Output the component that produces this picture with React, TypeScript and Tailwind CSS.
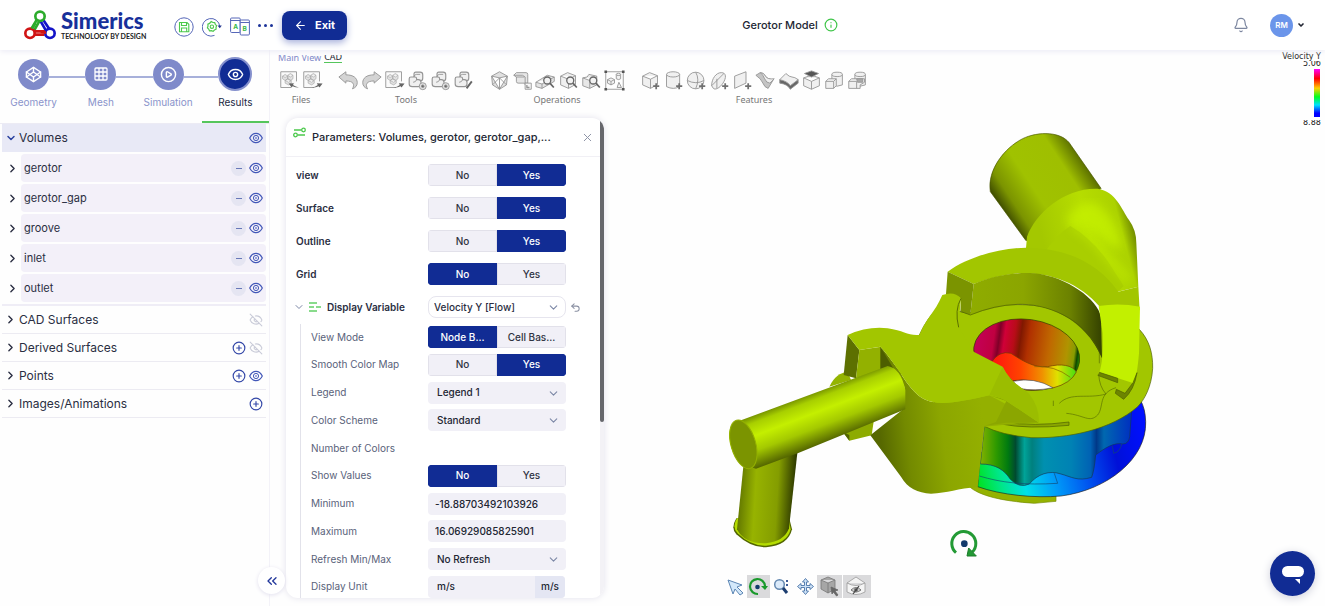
import type { ReactNode } from "react";
import { ArrowLeft, Bell, ChevronDown, ChevronRight, ChevronsLeft, CirclePlus, CirclePlay, Codepen, Eye, EyeOff, Info, Undo2, X } from "lucide-react";

const steps = [
    { label: "Geometry", icon: <Codepen size={17} strokeWidth={2} /> },
    { label: "Mesh", icon: <MeshIcon /> },
    { label: "Simulation", icon: <CirclePlay size={17} strokeWidth={2} /> },
    { label: "Results", icon: <Eye size={17} strokeWidth={2} />, active: true },
];

const volumes = ["gerotor", "gerotor_gap", "groove", "inlet", "outlet"];

const sections = [
    { label: "CAD Surfaces", add: false, eye: "off" },
    { label: "Derived Surfaces", add: true, eye: "off" },
    { label: "Points", add: true, eye: "on" },
    { label: "Images/Animations", add: true, eye: "" },
];

const toolGroups: { label: string; tools: string[] }[] = [
    { label: "Files", tools: ["import", "export"] },
    { label: "Tools", tools: ["undo", "redo", "export", "union", "union", "edit"] },
    { label: "Operations", tools: ["facets", "simplify", "findface", "findcube", "findmesh", "bounds"] },
    { label: "Features", tools: ["cube", "cylinder", "sphere", "disc", "plane", "sheet", "thicken", "cap", "merge", "intersect"] },
];

/* ---------- Icons ---------- */

function MeshIcon() {
    return (
        <svg width="14" height="14" viewBox="0 0 14 14" fill="none" stroke="currentColor" strokeWidth="1.3">
            <rect x="1" y="1" width="12" height="12" rx="1" />
            <path d="M5 1v12M9 1v12M1 5h12M1 9h12" />
        </svg>
    );
}

function Logo() {
    return (
        <svg className="shrink-0" width="32" height="30" viewBox="0 0 96 90" fill="none" strokeWidth="8">
            <path d="M38 30L20 60M47 32L31 60" stroke="#2bab2b" />
            <path d="M58 30L78 60M50 34L66 62" stroke="#1414c8" />
            <path d="M30 64H66M30 74H62" stroke="#d01414" />
            <circle cx="48" cy="19" r="14" stroke="#2bab2b" fill="#fff" />
            <circle cx="18" cy="70" r="14" stroke="#d01414" fill="#fff" />
            <circle cx="78" cy="70" r="14" stroke="#1414c8" fill="#fff" />
            <path d="M24 56L34 40" stroke="#2bab2b" />
            <path d="M50 66L66 68" stroke="#d01414" />
        </svg>
    );
}

function SaveIcon() {
    return (
        <svg width="20" height="20" viewBox="0 0 20 20" fill="none">
            <circle cx="10" cy="10" r="9.2" stroke="#5667b8" />
            <path d="M5.5 5.5h7.500l1.800 1.800v7.400H5.500zM7.500 5.500v3h5v-3M7.500 14.500v-3.500h5.200v3.500" stroke="#4cc94c" strokeWidth="1.100" />
        </svg>
    );
}

function GearIcon() {
    return (
        <svg width="20" height="20" viewBox="0 0 20 20" fill="none">
            <path d="M12.500 18.400A8.800 8.800 0 1 1 17.800 9.500" stroke="#5667b8" />
            <path d="M15.500 8.500l2.300 2.800 2-2.800z" fill="#24368f" />
            <path d="M9.200 4.500l1.700 1 1.800.1.600 1.700 1.300 1.300-.600 1.700.1 1.900-1.700.8-1.300 1.300-1.700-.600-1.900.1-.8-1.700-1.300-1.300.600-1.700-.1-1.900 1.700-.8z" stroke="#4cc94c" strokeWidth="1.200" />
            <circle cx="9.900" cy="9.700" r="1.700" stroke="#4cc94c" strokeWidth="1.100" />
        </svg>
    );
}

function CompareIcon() {
    return (
        <svg width="20" height="20" viewBox="0 0 20 20" fill="none">
            <rect x=".6" y="1" width="9.600" height="14.500" rx="1" stroke="#5667b8" />
            <rect x="10.200" y="3" width="9.200" height="15" rx="1" stroke="#5667b8" fill="#fff" />
            <path d="M.6 3.500h9.600M10.200 5.500h9.200" stroke="#5667b8" />
            <text x="3.200" y="11.500" fontSize="6.500" fontWeight="700" fill="#35b845">A</text>
            <text x="12.600" y="13.800" fontSize="6.500" fontWeight="700" fill="#35b845">B</text>
        </svg>
    );
}

function SlidersIcon() {
    return (
        <svg width="13" height="12" viewBox="0 0 13 12" fill="none" stroke="#4cc94c" strokeWidth="1.300">
            <circle cx="10.500" cy="3" r="1.800" />
            <circle cx="2.500" cy="8" r="1.800" />
            <path d="M1 3h7.500M4.500 8H12" />
        </svg>
    );
}

function TreeEye({ off = false }: { off?: boolean }) {
    return off ? (
        <EyeOff size={14} strokeWidth={1.8} className="text-[#c9cbd8]" />
    ) : (
        <svg width="14" height="12" viewBox="0 0 14 12" fill="none" stroke="#4358b8">
            <path d="M.7 6C2.200 3 4.500 1.300 7 1.300S11.800 3 13.300 6c-1.500 3-3.800 4.700-6.300 4.700S2.200 9 .7 6z" strokeWidth="1.200" />
            <circle cx="7" cy="6" r="2.600" />
            <circle cx="7" cy="6" r=".5" strokeWidth=".8" />
        </svg>
    );
}

const plus = <path d="M18.500 15v7M15 18.500h7" stroke="#707070" strokeWidth="2" />;
const lens = (
    <g stroke="#666">
        <circle cx="14" cy="12" r="4" fill="#f2f2f2" strokeWidth="1.500" />
        <path d="M17 15l4.500 5" strokeWidth="2" />
    </g>
);
const box = <path d="M3 7l8-4 9 3.500v10L12 21l-9-4zM3 7l9 3.500 8-4M12 10.500V21" />;
const fileSheet = (
    <>
        <path d="M20 13V2H2v18h12" fill="#fafafa" />
        <path d="M4 7l3-2 3 2v3l-3 2-3-2zM4 7l3 1.500L10 7M10 6l3-2 3 2v4l-3 2-3-2zM10 6l3 2 3-2M7 12l3-2 4 2v3l-3 2-4-2zM7 12l4 2 3-2" fill="#e2e2e2" stroke="#a5a5a5" strokeWidth=".7" />
    </>
);
const blocks = (
    <>
        <path d="M8 4.500q0-2 2-2h5q3 0 3 3v4q0 3-3 3h-5q-2 0-2-2z" strokeWidth="1.300" />
        <path d="M2.500 10q0-2 2-2H9q2 0 2 2v1h2q3 0 3 3v2q0 3-3 3H6q-3.500 0-3.500-3z" strokeWidth="1.300" />
        <path d="M11 11q-1 3-4 3M8 8q0-3 3-3h4" fill="none" />
    </>
);

const glyphs: Record<string, ReactNode> = {
    import: <>{fileSheet}<path d="M23 20q-4-1-7-3l1-1.800-6 .3 3.500 4.500 1-1.500q3 1.500 7.500 1.500z" fill="#666" stroke="none" /></>,
    export: <>{fileSheet}<path d="M11 20q4-.5 7-3l-1-1.800 6.500.3-3.500 4.500-1-1.500q-4 2-8 1.500z" fill="#666" stroke="none" /></>,
    undo: <path d="M1 8l8-6v3.500c9 0 13 4 13 9q0 5-5.500 7c3-5 1-9-7.500-9V15z" fill="#d4d4d4" />,
    redo: <path d="M23 8l-8-6v3.500c-9 0-13 4-13 9q0 5 5.500 7c-3-5-1-9 7.500-9V15z" fill="#d4d4d4" />,
    union: <>{blocks}<circle cx="18" cy="18.500" r="4" fill="#e2e2e2" /><circle cx="18" cy="18.500" r="1.500" fill="#666" /></>,
    edit: <>{blocks}<path d="M21.500 13l-6 8" stroke="#666" strokeWidth="2.200" /></>,
    facets: <path d="M3 7l9-5 9 5-1 10-8 5-8-5zM3 7l9 2 9-2M12 9v13M12 9L4 17M12 9l8 8M3 7l9 15 9-15" fill="#e0e0e0" />,
    simplify: <><path d="M2 6l3-3h11q2 0 2 2v10H7q-2 0-2-2V8zM2 6h10l3 2v9M5 8h9" fill="#e6e6e6" /><path d="M15 15h7v7h-7z" fill="#f6f6f6" /><path d="M17 17v3h3" strokeWidth="1.500" /></>,
    findface: <><path d="M1 14l13-8 8 2v5L8 21l-7-2zM1 14l7 2 14-8M8 16v5" fill="#e4e4e4" />{lens}</>,
    findcube: <>{box}{lens}</>,
    findmesh: <><path d="M2 9l5-1 2-3 9 2v10l-8 4-8-3zM2 9l8 3 8-4M10 12v9" fill="#e8e8e8" />{lens}</>,
    bounds: (
        <>
            <path d="M2 2h20v20H2z" fill="none" />
            <path d="M4 11l4-2 4 2v4l-4 2-4-2zM4 11l4 2 4-2M8 13v4M14 5v5q3 2 5 0V5M15 20l2-6 3 6z" />
            <ellipse cx="16.500" cy="5" rx="2.500" ry="1.300" />
            <path d="M.5.5h3v3h-3zM20.500.5h3v3h-3zM.5 20.500h3v3h-3zM20.500 20.500h3v3h-3z" fill="#555" stroke="none" />
        </>
    ),
    cube: <>{box}{plus}</>,
    cylinder: <><path d="M4 5v14q8 4 15 0V5" /><ellipse cx="11.500" cy="5" rx="7.500" ry="3" />{plus}</>,
    sphere: <><circle cx="11" cy="12" r="9.500" /><path d="M1.500 12q10 5 19 0M11 2.500q5 8 0 19" fill="none" />{plus}</>,
    disc: <><path d="M3 18C3 10 8 3 14 3s6 6 2 12-9 8-11 6zM3 18L17 4M9 10v11" />{plus}</>,
    plane: <><path d="M3 7l13-5v13L3 21z" />{plus}</>,
    sheet: <><path d="M1 6l5-3q4 0 6 4t9 4l-6 10q-4-1-6-6T1 6z" fill="#c4c4c4" /><path d="M6 3q4 0 6 4t10 3l-5 5q-4 0-6-5T6 3z" fill="#eee" /></>,
    thicken: <><path d="M2 11v4q9 1 12 7l9-7v-4z" fill="#666" /><path d="M2 11l7-7q4 4 7 4t7 3l-9 7q-3-5-12-7z" /></>,
    cap: <><path d="M3 9l9-3 9 3v9l-9 4-9-4zM3 9l9 4 9-4M12 13v9" /><path d="M4 4l8-3 8 3-8 4z" fill="#555" /></>,
    merge: <><path d="M9 5v12q6 3 12 0V5" /><ellipse cx="15" cy="5" rx="6" ry="2.500" /><path d="M2 13l3-3h9v8l-3 3H2zM2 13h9v8M11 13l3-3" /></>,
    intersect: <><path d="M9 5v12q6 3 12 0V5" /><ellipse cx="15" cy="5" rx="6" ry="2.500" /><path d="M2 13l3-3h15v4l-5 3v4H2zM2 13h9v8" /><path d="M11 10h7v4h-6z" fill="#aaa" /></>,
};

function ToolButton({ name }: { name: string }) {
    return (
        <button aria-label={name} className="flex w-[23px] justify-center">
            <svg width="21" height="21" viewBox="0 0 24 24" fill="#f0f0f0" stroke="#949494" strokeLinejoin="round">
                {glyphs[name]}
            </svg>
        </button>
    );
}

/* ---------- Header ---------- */

function Header() {
    return (
        <header className="z-10 flex h-[50px] shrink-0 items-center bg-white pr-5 pl-6 shadow-[0_1px_6px_#e9e8f4]">
            <a href="#" className="flex items-center gap-[5px]">
                <Logo />
                <span className="flex w-[113px] flex-col font-[Lato,sans-serif] text-[#17309a]">
                    <span className="text-[22px] leading-[22px] font-black">Simerics</span>
                    <span className="text-[7px] leading-[8px] font-bold whitespace-nowrap text-[#222]">TECHNOLOGY BY DESIGN</span>
                </span>
            </a>
            <div className="flex items-center gap-2 pt-1">
                <button aria-label="Save"><SaveIcon /></button>
                <button aria-label="Run settings"><GearIcon /></button>
                <button aria-label="Compare"><CompareIcon /></button>
                <button aria-label="More" className="mb-1 flex gap-[3px]">
                    <span className="size-[3px] rounded-full bg-[#1c3399]"></span>
                    <span className="size-[3px] rounded-full bg-[#1c3399]"></span>
                    <span className="size-[3px] rounded-full bg-[#1c3399]"></span>
                </button>
            </div>
            <button className="ml-[9px] flex h-[29px] items-center gap-2 rounded-lg bg-[#112c94] px-3 text-[11px] font-bold text-white shadow-[0_3px_7px_#aab3dc]">
                <ArrowLeft size={13} />
                Exit
            </button>
            <div className="flex flex-1 items-center justify-center gap-[6px] text-[11px] font-medium">
                <h1>Gerotor Model</h1>
                <Info size={14} className="text-[#3fc549]" />
            </div>
            <button aria-label="Notifications"><Bell size={16} strokeWidth={1.8} className="text-[#7d87a0]" /></button>
            <button className="ml-[21px] flex items-center gap-1">
                <span className="flex size-[23px] items-center justify-center rounded-full bg-[#6b95ea] text-[8px] font-semibold text-white">RM</span>
                <ChevronDown size={8} strokeWidth={5} />
            </button>
        </header>
    );
}

/* ---------- Sidebar ---------- */

function StepNav() {
    return (
        <nav className="grid grid-cols-4 border-b border-[#ecebf4]">
            {steps.map((step, i) => (
                <button key={step.label} className={`flex h-[73px] flex-col items-center border-b-2 pt-[6px] text-[10px] ${step.active ? "border-[#55c65c] text-[#222842]" : "border-transparent text-[#8a94cb]"}`}>
                    <span className="flex h-9 w-full items-center">
                        <span className={`mt-[6px] h-[2px] flex-1 ${i > 0 ? "bg-[#a7b0da]" : ""}`}></span>
                        <span className={`flex items-center justify-center rounded-full text-white ${step.active ? "size-[34px] border-2 border-[#8590cd] bg-[#112c94]" : "size-[31px] bg-[#7f8aca]"}`}>
                            {step.icon}
                        </span>
                        <span className={`mt-[6px] h-[2px] flex-1 ${i < 3 ? "bg-[#a7b0da]" : ""}`}></span>
                    </span>
                    <span className="mt-[3px] leading-[14px]">{step.label}</span>
                </button>
            ))}
        </nav>
    );
}

function Sidebar() {
    return (
        <aside className="relative w-[270px] shrink-0 border-r border-[#f3f2f8] text-[12px] text-[#2a2e42]">
            <StepNav />
            <div className="pr-[3px] pl-[2px]">
                <div className="flex h-7 items-center bg-[#e8e9f6] pr-[3px] pl-[3px]">
                    <button className="flex flex-1 items-center gap-[2px] text-left">
                        <ChevronDown size={12} strokeWidth={3} className="text-[#2b42a0]" />
                        Volumes
                    </button>
                    <button aria-label="Toggle Volumes"><TreeEye /></button>
                </div>
                <ul className="flex flex-col gap-[2px] border-b-2 border-[#efedf6] py-[2px] text-[11px]">
                    {volumes.map((name) => (
                        <li key={name} className="flex h-7 items-center">
                            <button aria-label={`Expand ${name}`} className="w-[19px] pl-[4px]"><ChevronRight size={13} strokeWidth={2.5} /></button>
                            <div className="flex h-full flex-1 items-center rounded bg-[#f3f0f9] pr-[3px] pl-[3px]">
                                <span className="flex-1">{name}</span>
                                <button aria-label={`Remove ${name}`} className="mr-[3px] flex size-[15px] items-center justify-center rounded-full bg-[#e5e5f2]">
                                    <span className="h-px w-[6px] bg-[#6878b8]"></span>
                                </button>
                                <button aria-label={`Toggle ${name}`}><TreeEye /></button>
                            </div>
                        </li>
                    ))}
                </ul>
                {sections.map((s) => (
                    <div key={s.label} className="flex h-[28px] items-center gap-[3px] border-b border-[#ecebf2] pr-[3px] pl-[2px]">
                        <button className="flex flex-1 items-center gap-[2px] text-left">
                            <ChevronRight size={13} strokeWidth={2.5} />
                            {s.label}
                        </button>
                        {s.add && <button aria-label={`Add ${s.label}`}><CirclePlus size={14} className="text-[#3448a8]" /></button>}
                        {s.eye && <button aria-label={`Toggle ${s.label}`}><TreeEye off={s.eye === "off"} /></button>}
                    </div>
                ))}
            </div>
            <button aria-label="Collapse sidebar" className="absolute -right-4 bottom-3 z-10 flex size-[27px] items-center justify-center rounded-full bg-white text-[#24399c] shadow-[0_1px_4px_#e2e0ee]">
                <ChevronsLeft size={16} />
            </button>
        </aside>
    );
}

/* ---------- Parameters panel ---------- */

function Toggle({ label, value, options = ["No", "Yes"] }: { label: string; value: number; options?: string[] }) {
    return (
        <div role="group" aria-label={label} className="flex h-[22px] w-[138px] overflow-hidden rounded text-[10px] font-medium">
            {options.map((o, i) => (
                <button key={o} aria-pressed={i === value} className={`w-1/2 border ${i === value ? "border-[#112c94] bg-[#112c94] text-white" : "border-[#e2e1ea] bg-[#f1f0f7] text-[#2f3342]"}`}>
                    {o}
                </button>
            ))}
        </div>
    );
}

function Select({ id, value, outlined = false }: { id: string; value: string; outlined?: boolean }) {
    return (
        <div className="relative w-[138px]">
            <select id={id} className={`h-[22px] w-full appearance-none text-[10px] font-medium ${outlined ? "rounded-lg border border-[#e6e5ee] bg-white pl-[5px]" : "rounded bg-[#f1f0f7] pl-[9px]"}`}>
                <option>{value}</option>
            </select>
            <ChevronDown size={13} className="pointer-events-none absolute top-[5px] right-[6px] text-[#7c87a6]" />
        </div>
    );
}

function Row({ label, htmlFor, children }: { label: string; htmlFor?: string; children?: ReactNode }) {
    return (
        <div className="flex h-[22px] items-center">
            {htmlFor ? <label htmlFor={htmlFor} className="w-[117px]">{label}</label> : <span className="w-[117px]">{label}</span>}
            {children}
        </div>
    );
}

function ParametersPanel() {
    return (
        <section className="flex w-[318px] shrink-0 overflow-hidden rounded-xl bg-white shadow-[0_0_7px_#e3e2ec]">
            <div className="flex min-w-0 flex-1 flex-col overflow-hidden">
                <div className="flex h-[39px] shrink-0 items-center border-b border-[#f1f0f5] pr-[6px] pl-[7px]">
                    <span className="mb-2"><SlidersIcon /></span>
                    <h2 className="ml-[6px] flex-1 truncate text-[11px] font-medium">Parameters: Volumes, gerotor, gerotor_gap,...</h2>
                    <button aria-label="Close" className="text-[#8c92a5]"><X size={13} strokeWidth={1.8} /></button>
                </div>
                <div className="flex flex-col gap-[11px] pt-[7px] pl-[10px] text-[10px] font-semibold text-[#2a2e42]">
                    {[["view", 1], ["Surface", 1], ["Outline", 1], ["Grid", 0]].map(([label, value]) => (
                        <div key={label} className="flex h-[22px] items-center">
                            <span className="w-[132px]">{label}</span>
                            <Toggle label={String(label)} value={Number(value)} />
                        </div>
                    ))}
                    <div className="flex h-[22px] items-center">
                        <ChevronDown size={12} className="-ml-[3px] text-[#7c87a6]" />
                        <svg className="ml-1" width="12" height="10" viewBox="0 0 12 10" stroke="#63d067" strokeWidth="1.300">
                            <path d="M0 1h8M0 5h5M7 5h5M0 9h8" />
                        </svg>
                        <label htmlFor="variable" className="ml-[6px] w-[101px]">Display Variable</label>
                        <Select id="variable" value="Velocity Y [Flow]" outlined />
                        <button aria-label="Reset" className="ml-1 text-[#8a90a2]"><Undo2 size={11} strokeWidth={2.2} /></button>
                    </div>
                </div>
                <div className="mt-[6px] ml-[14px] flex h-[274px] shrink-0 flex-col justify-between border-l border-[#e2e2ea] pt-[2px] pl-[10px] text-[10px] text-[#59627a] [&_input]:text-[#222633] [&_select]:text-[#222633]">
                    <Row label="View Mode"><Toggle label="View Mode" value={0} options={["Node B...", "Cell Bas..."]} /></Row>
                    <Row label="Smooth Color Map"><Toggle label="Smooth Color Map" value={1} /></Row>
                    <Row label="Legend" htmlFor="legend"><Select id="legend" value="Legend 1" /></Row>
                    <Row label="Color Scheme" htmlFor="scheme"><Select id="scheme" value="Standard" /></Row>
                    <Row label="Number of Colors" />
                    <Row label="Show Values"><Toggle label="Show Values" value={0} /></Row>
                    <Row label="Minimum" htmlFor="min"><input id="min" defaultValue="-18.88703492103926" className="h-[22px] w-[138px] rounded bg-[#f1f0f7] px-[7px] font-medium" /></Row>
                    <Row label="Maximum" htmlFor="max"><input id="max" defaultValue="16.06929085825901" className="h-[22px] w-[138px] rounded bg-[#f1f0f7] px-[7px] font-medium" /></Row>
                    <Row label="Refresh Min/Max" htmlFor="refresh"><Select id="refresh" value="No Refresh" /></Row>
                    <Row label="Display Unit" htmlFor="unit">
                        <div className="flex h-[22px] w-[137px] overflow-hidden rounded bg-[#f1f0f7]">
                            <input id="unit" defaultValue="m/s" className="min-w-0 flex-1 px-[9px] font-medium" />
                            <button className="bg-[#e4e6f3] px-[6px] font-medium text-[#222633]">m/s</button>
                        </div>
                    </Row>
                </div>
            </div>
            <div className="w-1 bg-[#f3f2f6]">
                <div className="h-[304px] rounded-full bg-[#66676c]"></div>
            </div>
        </section>
    );
}

/* ---------- Model view ---------- */

function GerotorModel() {
    return (
        <svg role="img" aria-label="Gerotor model" className="h-[450px] w-[480px] shrink-0" viewBox="0 0 1440 1350" fill="none" strokeLinejoin="round">
            <defs>
                <linearGradient id="disc" gradientUnits="userSpaceOnUse" x1="830" y1="1060" x2="1334" y2="940">
                    <stop offset="0" stopColor="#00e22a" />
                    <stop offset=".12" stopColor="#00e68a" />
                    <stop offset=".25" stopColor="#00e0e8" />
                    <stop offset=".42" stopColor="#009cf8" />
                    <stop offset=".6" stopColor="#0058f0" />
                    <stop offset=".8" stopColor="#0010d8" />
                    <stop offset="1" stopColor="#0010ff" />
                </linearGradient>
                <linearGradient id="wall" gradientUnits="userSpaceOnUse" x1="840" y1="0" x2="1290" y2="0">
                    <stop offset="0" stopColor="#7fb000" />
                    <stop offset=".1" stopColor="#2f9a00" />
                    <stop offset=".18" stopColor="#007a10" />
                    <stop offset=".23" stopColor="#004a30" />
                    <stop offset=".29" stopColor="#00a398" />
                    <stop offset=".34" stopColor="#00807e" />
                    <stop offset=".42" stopColor="#0090b0" />
                    <stop offset=".6" stopColor="#0082b4" />
                    <stop offset=".73" stopColor="#0062b4" />
                    <stop offset=".77" stopColor="#003888" />
                    <stop offset=".82" stopColor="#0068b0" />
                    <stop offset="1" stopColor="#0030c0" />
                </linearGradient>
                <linearGradient id="bore" gradientUnits="userSpaceOnUse" x1="818" y1="0" x2="1137" y2="0">
                    <stop offset="0" stopColor="#c40058" />
                    <stop offset=".17" stopColor="#c00040" />
                    <stop offset=".22" stopColor="#800028" />
                    <stop offset=".27" stopColor="#d00038" />
                    <stop offset=".36" stopColor="#b80c18" />
                    <stop offset=".42" stopColor="#801800" />
                    <stop offset=".5" stopColor="#b03000" />
                    <stop offset=".7" stopColor="#c06800" />
                    <stop offset=".87" stopColor="#b09400" />
                    <stop offset=".94" stopColor="#889c00" />
                    <stop offset=".97" stopColor="#104800" />
                    <stop offset="1" stopColor="#289000" />
                </linearGradient>
                <linearGradient id="floor" gradientUnits="userSpaceOnUse" x1="870" y1="0" x2="1125" y2="0">
                    <stop offset="0" stopColor="#ff1010" />
                    <stop offset=".35" stopColor="#ff4400" />
                    <stop offset=".6" stopColor="#f09000" />
                    <stop offset=".78" stopColor="#e0e000" />
                    <stop offset="1" stopColor="#48e010" />
                </linearGradient>
                <linearGradient id="outlet" gradientUnits="userSpaceOnUse" x1="915" y1="285" x2="1150" y2="130">
                    <stop offset="0" stopColor="#3f4d00" />
                    <stop offset=".14" stopColor="#7b9400" />
                    <stop offset=".4" stopColor="#a0c200" />
                    <stop offset=".8" stopColor="#9fbf00" />
                    <stop offset="1" stopColor="#5c7000" />
                </linearGradient>
                <linearGradient id="elbow" gradientUnits="userSpaceOnUse" x1="1030" y1="380" x2="1300" y2="310">
                    <stop offset="0" stopColor="#a4c800" />
                    <stop offset=".5" stopColor="#b6dd00" />
                    <stop offset=".85" stopColor="#acd200" />
                    <stop offset="1" stopColor="#6a8300" />
                </linearGradient>
                <linearGradient id="inlet" gradientUnits="userSpaceOnUse" x1="345" y1="812" x2="402" y2="962">
                    <stop offset="0" stopColor="#6f8a00" />
                    <stop offset=".15" stopColor="#a8cf00" />
                    <stop offset=".38" stopColor="#c4ef00" />
                    <stop offset=".65" stopColor="#a4c900" />
                    <stop offset="1" stopColor="#4c5c00" />
                </linearGradient>
                <linearGradient id="leg" gradientUnits="userSpaceOnUse" x1="112" y1="1130" x2="278" y2="1140">
                    <stop offset="0" stopColor="#617600" />
                    <stop offset=".3" stopColor="#97b300" />
                    <stop offset=".7" stopColor="#849d00" />
                    <stop offset="1" stopColor="#303c00" />
                </linearGradient>
                <linearGradient id="body" gradientUnits="userSpaceOnUse" x1="540" y1="970" x2="850" y2="930">
                    <stop offset="0" stopColor="#566800" />
                    <stop offset=".25" stopColor="#738a00" />
                    <stop offset=".6" stopColor="#8ca600" />
                    <stop offset="1" stopColor="#94b000" />
                </linearGradient>
                <linearGradient id="ring" gradientUnits="userSpaceOnUse" x1="808" y1="0" x2="1205" y2="0">
                    <stop offset="0" stopColor="#8fac00" />
                    <stop offset=".4" stopColor="#8ba500" />
                    <stop offset=".75" stopColor="#6c8200" />
                    <stop offset="1" stopColor="#334000" />
                </linearGradient>
                <filter id="soft"><feGaussianBlur stdDeviation="14" /></filter>
            </defs>

            {/* base and rotor */}
            <path d="M805 1100Q850 1140 1000 1150L1065 1144V1115L830 1080z" fill="#94b200" stroke="#728a00" strokeWidth="2" />
            <path d="M838 1000L830 1100C900 1125 1000 1135 1080 1128C1220 1110 1338 1015 1334 905Q1333 865 1318 840L1000 900z" fill="url(#disc)" stroke="#222" strokeWidth="2" />
            <path d="M850 915L838 1032C885 1032 910 1050 928 1078Q955 1106 985 1092C1010 1062 1045 1050 1080 1062C1110 1070 1130 1085 1172 1072Q1180 1050 1184 1005C1210 985 1240 966 1265 972Q1283 972 1286 950L1292 870L1180 920L1000 945z" fill="url(#wall)" stroke="#143858" strokeWidth="2" />
            <path d="M835 1068C900 1088 970 1096 1070 1090L1060 1060M1234 978L1238 1000Q1258 995 1262 972" stroke="#124a72" strokeWidth="2" />

            {/* flange */}
            <path d="M655 645Q680 590 715 560L800 580C900 540 1050 545 1150 600L1315 628C1345 660 1356 700 1355 745C1352 800 1330 840 1310 860C1230 930 1100 956 990 953Q900 945 848 918L700 850z" fill="#a2c600" stroke="#4c5e00" strokeWidth="2" />
            <path d="M848 918L908 906Q1000 920 1104 906V916Q980 928 900 912" fill="#8aa600" stroke="#4c5e00" strokeWidth="2" />
            <ellipse cx="977" cy="704" rx="160" ry="106" transform="rotate(8 977 704)" fill="url(#bore)" stroke="#323c00" strokeWidth="2" />
            <path d="M870 728Q895 690 930 700C960 720 1000 745 1040 740C1080 730 1115 735 1126 756Q1110 790 1055 804Q990 772 935 782L900 750z" fill="url(#floor)" stroke="#703800" strokeWidth="2" />
            <path d="M1000 740Q1060 735 1108 772" stroke="#806000" strokeWidth="2" />
            <path d="M936 784Q1000 770 1056 803Q1000 815 955 805z" fill="#fff" stroke="#555" strokeWidth="2" />
            <path d="M1075 850C1110 815 1160 838 1215 822Q1195 800 1193 762M1245 803C1190 820 1210 860 1190 885C1165 910 1150 885 1096 880M1057 842V858M1195 690V730" stroke="#5b7000" strokeWidth="2" />

            {/* outlet pipe */}
            <path d="M868 215C858 150 910 84 965 56C1010 34 1085 32 1110 76L1200 205L1110 300L975 362z" fill="url(#outlet)" stroke="#4a5800" strokeWidth="2" />
            <path d="M975 384L978 350C1005 278 1090 203 1190 206C1245 214 1262 268 1284 300Q1306 330 1306 370L1312 500L1250 515L1100 400z" fill="url(#elbow)" />
            <path d="M1095 300Q1125 245 1180 250Q1250 290 1262 390L1220 370Q1160 315 1110 318z" fill="#cbf800" opacity=".6" filter="url(#soft)" />
            <path d="M1028 402Q1060 350 1108 318Q1165 350 1218 420L1268 498L1250 515Q1150 420 1028 402z" fill="#a9ce00" />
            <path d="M1112 316Q1170 345 1220 415L1285 480" stroke="#cdfb00" strokeWidth="16" opacity=".5" filter="url(#soft)" />

            {/* raised ring */}
            <path d="M740 455C800 410 900 384 975 383C1110 384 1200 440 1252 515L1312 500L1316 570L1198 562C1130 480 1030 455 950 460Q880 468 818 492z" fill="#a2c600" />
            <path d="M818 492C880 465 950 456 1000 460C1100 470 1190 540 1200 590L1203 715C1150 590 1030 550 950 553Q880 560 808 585z" fill="url(#ring)" />
            <path d="M740 455L818 492L808 585L778 574L780 535L735 522z" fill="#7b9400" />
            <path d="M778 574L808 585Q880 555 950 553C1030 550 1150 590 1197 700" stroke="#4c5e00" strokeWidth="2" />
            <path d="M1193 558Q1255 548 1317 560L1314 700Q1308 770 1298 790L1195 757Q1208 720 1205 640z" fill="#c2f000" />
            <path d="M1195 757L1250 775V788L1190 766M1243 820L1268 838Q1300 810 1308 758L1296 788L1272 820L1246 808z" fill="#6d8400" stroke="#4c5e00" strokeWidth="2" />

            {/* bracket */}
            <path d="M385 800Q405 758 440 756L450 780z" fill="#94b400" />
            <path d="M440 645L475 690L465 775L428 765z" fill="#5d7000" />
            <path d="M475 690L540 680V750L465 775z" fill="#93b100" />
            <path d="M538 680L600 760L610 800L538 755z" fill="#4d5e00" />
            <path d="M425 935L520 890L512 946L445 962z" fill="#8dab00" />
            <path d="M425 935L445 962V945" fill="#526400" />

            {/* housing */}
            <path d="M538 680C600 750 620 810 670 838C715 860 780 845 865 826L1014 905L850 920L830 1102C770 1105 740 1120 690 1121C650 1118 620 1105 600 1070L508 946L610 865V800z" fill="url(#body)" />
            <path d="M865 826L930 842L1014 908L915 908L850 918L885 906L916 843z" fill="#8ba600" />
            <path d="M440 645Q500 618 560 625C610 632 620 648 655 645C675 595 700 580 724 525Q760 512 780 535L772 620L818 695L905 740C930 790 960 800 985 822Q1015 860 1014 908L915 842Q890 828 865 826C780 845 715 860 670 838C620 810 600 750 538 680L475 690z" fill="#a2c600" />
            <path d="M780 535Q760 570 773 622" stroke="#5b7000" strokeWidth="3" />
            <path d="M905 740C930 790 960 800 985 822Q1015 860 1014 908L915 842Q890 828 865 826" fill="#9bbd00" />

            {/* inlet pipe */}
            <path d="M106 1195Q88 1225 106 1243Q150 1284 195 1282Q262 1277 273 1228L266 1200z" fill="#536600" />
            <path d="M108 1195Q92 1222 110 1240Q150 1279 195 1277Q258 1272 269 1228L264 1200z" fill="#b4dc00" />
            <path d="M128 1030L108 1228Q130 1272 195 1270Q250 1264 264 1225L290 990z" fill="url(#leg)" />
            <path d="M120 901L560 738Q600 745 613 810V868L290 1000L165 1046Q90 1030 84 945Q86 905 120 901z" fill="url(#inlet)" />
            <ellipse cx="127" cy="973" rx="37" ry="75" transform="rotate(-16 127 973)" fill="#7b9400" stroke="#93b000" strokeWidth="3" />

            {/* rotation centre */}
            <path d="M765 1298A36 36 0 1 1 814 1296" stroke="#239a35" strokeWidth="9" />
            <path d="M798 1308L803 1284L826 1308z" fill="#239a35" stroke="#1c7c2b" strokeWidth="3" />
            <circle cx="790" cy="1271" r="10" fill="#123a6b" />
        </svg>
    );
}

function Legend() {
    return (
        <div className="absolute top-[3px] right-1 flex flex-col items-end font-['DejaVu_Sans',sans-serif] text-[8px] text-[#222]">
            <span className="leading-[8px]">Velocity Y</span>
            <span className="flex h-[6px] w-[18px] items-end overflow-hidden leading-[6px]">5.069</span>
            <span className="mt-[2px] mr-px h-12 w-[6px] bg-[linear-gradient(to_bottom,#ff00ff,#ff0000_20%,#ffd000_40%,#00ff20_58%,#00e0ff_75%,#0000ff_92%)]"></span>
            <span className="mt-[3px] h-[5px] w-[18px] overflow-hidden leading-[6px]">8.887</span>
        </div>
    );
}

function ViewBar() {
    return (
        <div className="absolute bottom-2 left-1/2 flex h-[23px] -translate-x-1/2 items-center">
            <button aria-label="Select" className="flex h-full w-[22px] items-center justify-center">
                <svg width="17" height="18" viewBox="0 0 17 18" fill="#d3e8fa" stroke="#5c86b4">
                    <path d="M1 2l14 5-5 2 6 6-3 2-5-6-2 5z" />
                </svg>
            </button>
            <button aria-label="Rotate" aria-pressed="true" className="flex h-full w-[23px] items-center justify-center bg-[#dadadc]">
                <svg width="20" height="20" viewBox="0 0 20 20" fill="none">
                    <path d="M10 17A7.500 7.500 0 1 1 17 9" stroke="#1a9a2c" strokeWidth="2.200" />
                    <path d="M13 9h7l-3 4z" fill="#1a9a2c" />
                    <circle cx="9.500" cy="10" r="2.300" fill="#123a6b" />
                </svg>
            </button>
            <button aria-label="Zoom" className="flex h-full w-6 items-center justify-center">
                <svg width="17" height="17" viewBox="0 0 17 17" fill="none">
                    <circle cx="6.500" cy="6.500" r="4.800" fill="#dbeafa" stroke="#6488b0" strokeWidth="1.500" />
                    <path d="M10 10l4 5" stroke="#1c3d70" strokeWidth="3" />
                    <path d="M14 2v2M14 6v2" stroke="#3c5c98" strokeWidth="2" />
                </svg>
            </button>
            <button aria-label="Pan" className="flex h-full w-[23px] items-center justify-center">
                <svg width="17" height="17" viewBox="0 0 17 17" fill="#cfe3f7" stroke="#4a74a8" strokeWidth=".9">
                    <path d="M8.500.5l3 3.500h-2v3.500H13v-2l3.500 3-3.500 3v-2H9.500V13h2l-3 3.500-3-3.500h2V9.500H4v2l-3.500-3 3.500-3v2h3.500V4h-2z" />
                </svg>
            </button>
            <button aria-label="Pick solid" className="flex h-full w-[25px] items-center justify-center bg-[#dadadc]">
                <svg width="21" height="21" viewBox="0 0 21 21" fill="#a6a6a6" stroke="#777" strokeWidth=".8">
                    <path d="M2 4l7-3 7 3v9l-7 4-7-4zM2 4l7 3 7-3M9 7v10" />
                    <path d="M12 11l7 3-3 1 3 4-1.500 1-3-4-1.500 2z" fill="#666" stroke="#666" />
                </svg>
            </button>
            <button aria-label="Hide part" className="ml-px flex h-full w-7 items-center justify-center bg-[#dadadc]">
                <svg width="21" height="21" viewBox="0 0 21 21" fill="#f4f4f4" stroke="#999" strokeWidth=".8">
                    <path d="M1 7l9-6 9 6v9q-9 5-18 0zM1 7q9 5 18 0" />
                    <path d="M5 14q5-5 10 0-5 4-10 0z" fill="#ddd" stroke="#555" />
                    <circle cx="10" cy="14" r="2" fill="#555" />
                    <path d="M7 18l6-8" stroke="#444" strokeWidth="1.200" />
                </svg>
            </button>
        </div>
    );
}

export default function App() {
    return (
        <div className="flex h-screen flex-col overflow-hidden bg-[#fefefe] font-[Inter,'Open_Sans',sans-serif] text-[#222633]">
            <Header />
            <div className="flex min-h-0 flex-1">
                <Sidebar />
                <main className="relative flex min-w-0 flex-1 flex-col">
                    <div className="pt-[5px] pl-2 font-['Noto_Sans',sans-serif] text-[9px]">
                        <div role="tablist" className="flex h-[8px] items-end gap-[3px] overflow-hidden leading-[10px]">
                            <button role="tab" className="text-[#8088c8]">Main View</button>
                            <button role="tab" aria-selected="true" className="border-b border-[#55c65c]">CAD</button>
                        </div>
                        <div className="mt-[7px] flex gap-[13px]">
                            {toolGroups.map((group) => (
                                <div key={group.label} className="flex flex-col items-center">
                                    <div className="flex">
                                        {group.tools.map((tool, i) => <ToolButton key={i} name={tool} />)}
                                    </div>
                                    <span className="mt-[3px] leading-[12px] text-[#777]">{group.label}</span>
                                </div>
                            ))}
                        </div>
                    </div>
                    <div className="mt-3 flex min-h-0 flex-1 pb-2 pl-4">
                        <ParametersPanel />
                        <div className="flex flex-1 items-start justify-center pt-[2px] pr-12">
                            <GerotorModel />
                        </div>
                    </div>
                    <Legend />
                    <ViewBar />
                    <button aria-label="Open chat" className="absolute right-[10px] bottom-[10px] flex size-[45px] items-center justify-center rounded-full bg-[#112c94] shadow-[0_2px_10px_#cfd0dc]">
                        <svg width="24" height="20" viewBox="0 0 24 20" fill="#fff">
                            <rect x="1" y="2" width="22" height="11" rx="5.500" />
                            <path d="M14 15h5v5z" />
                        </svg>
                    </button>
                </main>
            </div>
        </div>
    );
}
